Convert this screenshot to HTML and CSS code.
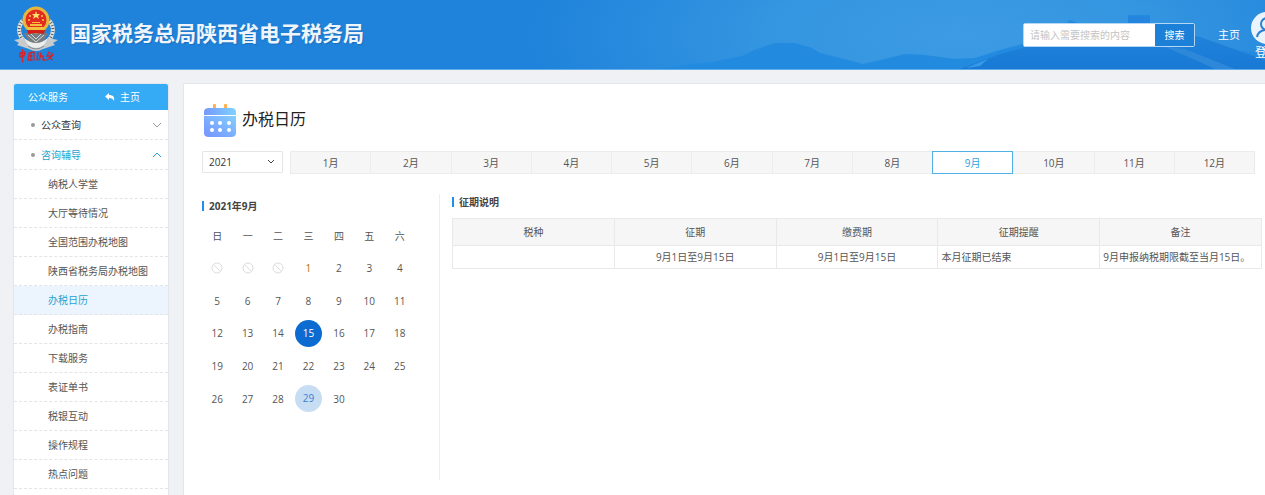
FILE: index.html
```html
<!DOCTYPE html>
<html lang="zh-CN">
<head>
  <meta charset="UTF-8">
  <title>办税日历</title>
  <link rel="stylesheet" href="styles.css">
</head>
<body>
  <header class="header">
    <svg class="header-bg" viewBox="0 0 1265 69" preserveAspectRatio="none" aria-hidden="true">
      <defs>
        <radialGradient id="sky" gradientUnits="userSpaceOnUse" cx="0" cy="0" r="1" gradientTransform="translate(960 35) scale(430 150)">
          <stop offset="0" stop-color="#3d9be4"/>
          <stop offset="0.45" stop-color="#3495e0"/>
          <stop offset="1" stop-color="#1f83db"/>
        </radialGradient>
        <linearGradient id="hill" x1="0" y1="0" x2="0" y2="1">
          <stop offset="0" stop-color="#2486de"/>
          <stop offset="1" stop-color="#197ad5"/>
        </linearGradient>
      </defs>
      <rect width="1265" height="69" fill="#1f83db"/>
      <rect x="520" width="745" height="69" fill="url(#sky)"/>
      <path d="M655 69 L690 64 L712 62 L742 56 L754 50 L775 43 L795 43 L812 48 L820 53 L840 58 L863 64 L885 59 L905 54 L925 55 L955 59 L975 58 L1000 50 L1030 42 L1060 30 L1070 20 L1080 24 L1128 24 L1128 15 L1150 15 L1150 28 L1180 33 L1210 43 L1235 50 L1265 54 V69 Z" fill="#238bdf"/>
      <path d="M960 69 L1000 54 L1030 46 L1060 34 L1100 32 L1128 24 L1128 16 L1150 16 L1150 28 L1200 37 L1265 60 V69 Z" fill="url(#hill)"/>
      <path d="M1163 46 L1185 49 L1235 69 H1215 L1200 62 Z" fill="#2e88da"/>
      <path d="M966 68 L988 59 L980 66 Z" fill="#379be7"/>
    </svg>

    <svg class="emblem" viewBox="0 0 44 57" role="img" aria-label="中国税务">
      <g fill="none" stroke="#e5e5df" stroke-width="4">
        <path d="M9 14 C1 24 6 34 17 40"/>
        <path d="M35 14 C43 24 38 34 27 40"/>
      </g>
      <g fill="none" stroke="#535b61" stroke-width="3" stroke-dasharray="1 2">
        <path d="M9 14 C1 24 6 34 17 40"/>
        <path d="M35 14 C43 24 38 34 27 40"/>
      </g>
      <path d="M10 27 L34 27 L29 37 L22 40 L15 37 Z" fill="#747d83"/>
      <path d="M14 29 L22 36 L30 29 M17 28 L22 33 L27 28" fill="none" stroke="#d9dcda"/>
      <path d="M0 34 L10 32 L15 38 H29 L34 32 L44 34 L39 37 L41 39 L29 43 Q22 47 15 43 L3 39 L5 37 Z" fill="#c7cbcc"/>
      <path d="M10 32 Q22 42 34 32 L30 39 Q22 45 14 39 Z" fill="#eceeed"/>
      <path d="M14 40 Q22 46 30 40" fill="none" stroke="#7d8c98"/>
      <circle cx="22" cy="14" r="12" fill="#e42b20" stroke="#e5b73d" stroke-width="3"/>
      <path d="M13 24 H31 L30 28 L22 27 L14 28 Z" fill="#d32019"/>
      <path d="M14 21 H30 V24 H14 Z M16 18 H28 V20 H16 Z M18 16 H26 V17 H18 Z" fill="#f3c13d"/>
      <path d="M22 5 L23 8 H26 L24 10 L25 13 L22 11 L19 13 L20 10 L18 8 H21 Z" fill="#ffe26a"/>
      <g fill="#f6cd4c">
        <circle cx="16" cy="10" r="1"/><circle cx="28" cy="10" r="1"/>
        <circle cx="15" cy="14" r="1"/><circle cx="29" cy="14" r="1"/>
      </g>
      <g fill="none" stroke="#d5222d" stroke-width="1.3" stroke-linecap="round">
        <path d="M6 47 L11 46 L10 50 L6 51 Z M8.500 44 V56"/>
        <path d="M15 47 L20 46 L20 54 M15 48 L14 54 L18 54 M16 50 H18 M17 48 V53"/>
        <path d="M24 47 L23 54 M27 47 L26 50 L29 50 M27 50 L25 54 M29 51 V54 H31"/>
        <path d="M35 46 L33 50 H38 L33 54 M37 47 L39 49 M36 51 L38 54"/>
      </g>
    </svg>
    <h1 class="site-name">国家税务总局陕西省电子税务局</h1>

    <form class="search">
      <input type="text" placeholder="请输入需要搜索的内容" aria-label="搜索内容">
      <button type="button">搜索</button>
    </form>
    <a class="home-link" href="#">主页</a>
    <a class="user" href="#">
      <svg viewBox="0 0 32 32" aria-hidden="true">
        <circle cx="16" cy="16" r="16" fill="#eaf3fc"/>
        <g fill="none" stroke="#2b80d0" stroke-width="2">
          <circle cx="16" cy="12" r="6"/>
          <path d="M6 25 C7 20 10 18 16 18 C22 18 25 20 26 25"/>
        </g>
      </svg>
      <span>登录</span>
    </a>
  </header>

  <div class="layout">
    <nav class="sidebar">
      <div class="sidebar-head">
        <span>公众服务</span>
        <a href="#">
          <svg viewBox="0 0 10 8" aria-hidden="true"><path d="M0 3.500 L4 0 V2 C8 2 10 4 9 8 C8 6 7 5 4 5 V7 Z" fill="#fff"/></svg>
          主页
        </a>
      </div>
      <a class="menu-item" href="#">
        公众查询
        <svg viewBox="0 0 10 6" aria-hidden="true"><path d="M1 1 L5 5 L9 1"/></svg>
      </a>
      <a class="menu-item open" href="#">
        咨询辅导
        <svg viewBox="0 0 10 6" aria-hidden="true"><path d="M1 5 L5 1 L9 5"/></svg>
      </a>
      <ul class="submenu">
        <li><a href="#">纳税人学堂</a></li>
        <li><a href="#">大厅等待情况</a></li>
        <li><a href="#">全国范围办税地图</a></li>
        <li><a href="#">陕西省税务局办税地图</a></li>
        <li><a class="active" href="#">办税日历</a></li>
        <li><a href="#">办税指南</a></li>
        <li><a href="#">下载服务</a></li>
        <li><a href="#">表证单书</a></li>
        <li><a href="#">税银互动</a></li>
        <li><a href="#">操作规程</a></li>
        <li><a href="#">热点问题</a></li>
      </ul>
    </nav>

    <main class="panel">
      <div class="page-title">
        <svg viewBox="0 0 32 34" aria-hidden="true">
          <defs>
            <linearGradient id="calTop" x1="0" y1="0" x2="1" y2="0">
              <stop offset="0" stop-color="#7598fb"/>
              <stop offset="1" stop-color="#7ed2ff"/>
            </linearGradient>
            <linearGradient id="calBody" x1="0" y1="1" x2="1" y2="0">
              <stop offset="0" stop-color="#7593ff"/>
              <stop offset="1" stop-color="#83ceff"/>
            </linearGradient>
          </defs>
          <rect x="9" y="0" width="3" height="6" rx="1" fill="#ffb04f"/>
          <rect x="20" y="0" width="3" height="6" rx="1" fill="#ffb04f"/>
          <path d="M0 11 V8 Q0 4 5 4 H27 Q32 4 32 8 V11 Z" fill="url(#calTop)"/>
          <path d="M0 12 H32 V29 Q32 33 27 33 H5 Q0 33 0 29 Z" fill="url(#calBody)"/>
          <g fill="#fff">
            <circle cx="8" cy="19" r="2"/><circle cx="16" cy="19" r="2"/><circle cx="25" cy="19" r="2"/>
            <circle cx="8" cy="26" r="2"/><circle cx="16" cy="26" r="2"/><circle cx="25" cy="26" r="2"/>
          </g>
        </svg>
        <h2>办税日历</h2>
      </div>

      <div class="filter">
        <div class="year">
          <select aria-label="年份">
            <option>2021</option>
          </select>
          <svg viewBox="0 0 8 6" aria-hidden="true"><path d="M1 1 L4 4 L7 1"/></svg>
        </div>
        <div class="months">
          <button type="button">1月</button>
          <button type="button">2月</button>
          <button type="button">3月</button>
          <button type="button">4月</button>
          <button type="button">5月</button>
          <button type="button">6月</button>
          <button type="button">7月</button>
          <button type="button">8月</button>
          <button type="button" class="active">9月</button>
          <button type="button">10月</button>
          <button type="button">11月</button>
          <button type="button">12月</button>
        </div>
      </div>

      <div class="content">
        <section class="calendar">
          <h3>2021年9月</h3>
          <table>
            <thead>
              <tr><th>日</th><th>一</th><th>二</th><th>三</th><th>四</th><th>五</th><th>六</th></tr>
            </thead>
            <tbody>
              <tr>
                <td><svg class="ban" viewBox="0 0 12 12"><circle cx="6" cy="6" r="5"/><path d="M2.500 2.500 L9.500 9.500"/></svg></td>
                <td><svg class="ban" viewBox="0 0 12 12"><circle cx="6" cy="6" r="5"/><path d="M2.500 2.500 L9.500 9.500"/></svg></td>
                <td><svg class="ban" viewBox="0 0 12 12"><circle cx="6" cy="6" r="5"/><path d="M2.500 2.500 L9.500 9.500"/></svg></td>
                <td class="first">1</td><td>2</td><td>3</td><td>4</td>
              </tr>
              <tr><td>5</td><td>6</td><td>7</td><td>8</td><td>9</td><td>10</td><td>11</td></tr>
              <tr><td>12</td><td>13</td><td>14</td><td><span class="day deadline">15</span></td><td>16</td><td>17</td><td>18</td></tr>
              <tr><td>19</td><td>20</td><td>21</td><td>22</td><td>23</td><td>24</td><td>25</td></tr>
              <tr><td>26</td><td>27</td><td>28</td><td><span class="day today">29</span></td><td>30</td><td></td><td></td></tr>
            </tbody>
          </table>
        </section>

        <section class="notes">
          <h3>征期说明</h3>
          <table>
            <thead>
              <tr><th>税种</th><th>征期</th><th>缴费期</th><th>征期提醒</th><th>备注</th></tr>
            </thead>
            <tbody>
              <tr>
                <td></td>
                <td>9月1日至9月15日</td>
                <td>9月1日至9月15日</td>
                <td class="left">本月征期已结束</td>
                <td class="left">9月申报纳税期限截至当月15日。</td>
              </tr>
            </tbody>
          </table>
        </section>
      </div>
    </main>
  </div>
</body>
</html>
```
FILE: styles.css
```css
* { box-sizing: border-box; }
body {
  margin: 0;
  height: 100vh;
  overflow: hidden;
  display: flex;
  flex-direction: column;
  font-family: "Open Sans", "Noto Sans CJK SC", sans-serif;
  font-size: 10px;
  line-height: 14px;
  color: #555;
  background-color: #f0f1f4;
}
a {
  color: inherit;
  text-decoration: none;
}
button, input, select {
  font: inherit;
  color: inherit;
  margin: 0;
}
svg { display: block; }
h1, h2, h3 { margin: 0; }
table { border-collapse: collapse; }

/* header */
.header {
  position: relative;
  flex: none;
  display: flex;
  align-items: center;
  height: 70px;
  padding-left: 14px;
  overflow: hidden;
  color: white;
  background-color: #1f83db;
  border-bottom: 1px solid #62ace9;
}
.header > * {
  position: relative;
  flex: none;
}
.header .header-bg {
  position: absolute;
  top: 0;
  left: 0;
  width: 100%;
  height: 100%;
}
.emblem {
  width: 44px;
  height: 57px;
}
.site-name {
  margin-left: 12px;
  padding-bottom: 4px;
  font-size: 21px;
  line-height: 28px;
  font-weight: 700;
  color: #eff5fc;
  text-shadow: 1px 1px 1px #1a6fbd;
}
.search {
  display: flex;
  width: 172px;
  height: 24px;
  margin-left: auto;
  border: 1px solid #b5d7f5;
  border-radius: 2px;
}
.search input {
  flex: 1;
  min-width: 0;
  padding: 0 6px;
  border: none;
  outline: none;
  color: #555;
  background-color: white;
}
.search input::placeholder { color: #c4c4c4; }
.search button {
  width: 39px;
  padding: 0;
  border: none;
  color: white;
  background-color: #1c80d9;
  cursor: pointer;
}
.home-link {
  margin-left: 23px;
  font-size: 11px;
}
.user {
  align-self: flex-start;
  width: 32px;
  margin: 12px -18px 0 11px;
  font-size: 12px;
  line-height: 18px;
  text-align: center;
}
.user svg {
  width: 32px;
  height: 32px;
}

/* sidebar */
.layout {
  flex: 1;
  min-height: 0;
  display: flex;
  gap: 14px;
  padding: 13px 0 0 13px;
}
.sidebar {
  flex: none;
  width: 156px;
  border: 1px solid #e3e7ec;
  border-bottom: none;
  border-radius: 3px 3px 0 0;
  background-color: white;
  overflow: hidden;
}
.sidebar-head {
  display: flex;
  align-items: center;
  gap: 37px;
  height: 26px;
  padding-left: 14px;
  color: white;
  background-color: #35aaf5;
}
.sidebar-head a {
  display: flex;
  align-items: center;
  gap: 5px;
}
.sidebar-head svg {
  width: 10px;
  height: 8px;
}
.menu-item {
  display: flex;
  align-items: center;
  height: 30px;
  padding: 0 6px 0 17px;
  color: #333;
  border-bottom: 1px dashed #e2e4e6;
}
.menu-item::before {
  content: "";
  width: 4px;
  height: 4px;
  margin-right: 6px;
  border-radius: 50%;
  background-color: #999;
}
.menu-item svg {
  width: 10px;
  height: 6px;
  margin-left: auto;
  fill: none;
  stroke: #999;
}
.menu-item.open { color: #26a2d0; }
.menu-item.open svg { stroke: #26a2d0; }
.submenu {
  margin: 0;
  padding: 0;
  list-style: none;
}
.submenu a {
  display: block;
  height: 29px;
  padding-left: 34px;
  line-height: 28px;
  border-bottom: 1px dashed #e2e4e6;
}
.submenu .active {
  color: #26a2d0;
  background-color: #ecf5fd;
}

/* main panel */
.panel {
  flex: 1;
  min-width: 0;
  padding: 20px 0 0 19px;
  border: 1px solid #e3e7ec;
  border-width: 1px 0 0 1px;
  background-color: white;
}
.layout .panel { padding-left: 18px; }
.page-title {
  display: flex;
  align-items: center;
  gap: 6px;
  height: 34px;
  padding-left: 2px;
}
.page-title svg {
  width: 32px;
  height: 34px;
}
.page-title h2 {
  padding-bottom: 4px;
  font-size: 16px;
  line-height: 20px;
  font-weight: 400;
  color: #222;
}
.filter {
  display: flex;
  align-items: flex-start;
  gap: 7px;
  margin: 13px 10px 0 0;
}
.year {
  position: relative;
  flex: none;
  width: 81px;
}
.year select {
  width: 100%;
  height: 22px;
  padding: 0 6px;
  appearance: none;
  color: #333;
  border: 1px solid #e6e6e6;
  border-radius: 1px;
  background-color: white;
}
.year svg {
  position: absolute;
  top: 8px;
  right: 8px;
  width: 8px;
  height: 6px;
  fill: none;
  stroke: #444;
  pointer-events: none;
}
.months {
  flex: 1;
  display: flex;
  height: 23px;
  border-right: 1px solid #e9e9e9;
}
.months button {
  flex: 1;
  padding: 0;
  border: 1px solid #ececec;
  border-right: none;
  background-color: #f6f6f6;
  cursor: pointer;
}
.months .active {
  color: #2c9fe0;
  border: 1px solid #4fb1e4;
  background-color: white;
}
.content {
  display: flex;
  margin-top: 20px;
}
h3 {
  padding-left: 5px;
  border-left: 2px solid #1e8ff0;
  font-size: 10px;
  line-height: 10px;
  font-weight: 700;
  color: #444;
}

/* calendar */
.calendar {
  flex: none;
  width: 238px;
  height: 286px;
  padding-top: 7px;
  border-right: 1px solid #eee;
}
.calendar table {
  width: 213px;
  height: 195px;
  margin-top: 9px;
  table-layout: fixed;
}
.calendar th, .calendar td {
  height: 32px;
  padding: 0;
  font-weight: 400;
  text-align: center;
}
.calendar .first { color: #a87420; }
.ban {
  width: 12px;
  height: 12px;
  margin: 0 auto;
  fill: none;
  stroke: #ddd;
}
.day {
  display: block;
  width: 27px;
  height: 27px;
  margin: 0 auto;
  line-height: 27px;
  border-radius: 50%;
}
.deadline {
  color: white;
  background-color: #0c6bd0;
}
.today {
  color: #3d7fd0;
  background-color: #c7ddf4;
}

/* levy period table */
.notes {
  flex: 1;
  min-width: 0;
  padding: 3px 3px 0 12px;
}
.notes table {
  width: 100%;
  margin-top: 11px;
  table-layout: fixed;
}
.notes th, .notes td {
  height: 23px;
  padding: 0 3px;
  border: 1px solid #e9e9e9;
  text-align: center;
  white-space: nowrap;
}
.notes th {
  height: 27px;
  font-weight: 400;
  background-color: #f6f6f6;
}
.notes .left { text-align: left; }
```
